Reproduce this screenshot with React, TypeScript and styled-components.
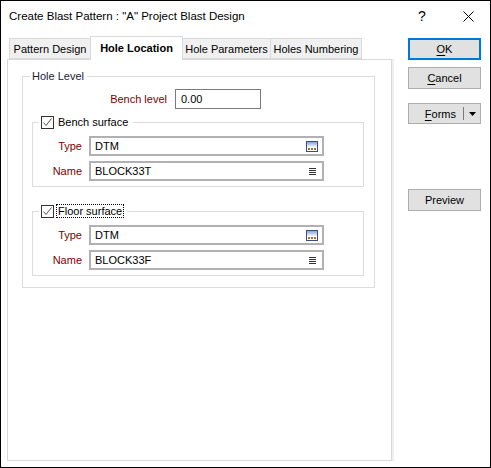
import React from 'react';
import styled, { createGlobalStyle } from 'styled-components';

const GlobalStyle = createGlobalStyle`
  html, body {
    margin: 0;
    padding: 0;
    background: #ffffff;
  }
  * {
    box-sizing: border-box;
  }
`;

const FONT = `"Liberation Sans", Arial, sans-serif`;

const Window = styled.div`
  width: 491px;
  height: 468px;
  border: 1px solid #000000;
  background: #ffffff;
  font-family: ${FONT};
  font-size: 11px;
  color: #000000;
  display: flex;
  flex-direction: column;
`;

const TitleBar = styled.div`
  height: 29px;
  display: flex;
  align-items: center;
  padding-left: 8px;
  padding-right: 10px;
  padding-top: 1px;
`;

const TitleText = styled.div`
  flex: 1;
  font-size: 11.5px;
  white-space: nowrap;
`;

const TitleButton = styled.div<{ $w: number }>`
  width: ${({ $w }) => $w}px;
  height: 29px;
  display: flex;
  align-items: center;
  justify-content: center;
  font-size: 14px;
`;

const Body = styled.div`
  flex: 1;
  display: flex;
  padding: 6px 0 0 6px;
`;

const LeftColumn = styled.div`
  width: 385px;
  display: flex;
  flex-direction: column;
`;

const TabStrip = styled.div`
  height: 23px;
  display: flex;
  align-items: flex-end;
  padding-left: 2px;
  position: relative;
  z-index: 1;
`;

const Tab = styled.div<{ $w: number; $active?: boolean }>`
  width: ${({ $w }) => $w}px;
  height: ${({ $active }) => ($active ? 24 : 21)}px;
  margin-bottom: ${({ $active }) => ($active ? -1 : 0)}px;
  margin-left: -1px;
  border: 1px solid #d9d9d9;
  border-bottom: ${({ $active }) => ($active ? 'none' : '1px solid #d9d9d9')};
  background: ${({ $active }) => ($active ? '#ffffff' : '#f0f0f0')};
  font-weight: ${({ $active }) => ($active ? 700 : 400)};
  display: flex;
  align-items: center;
  justify-content: center;
  padding-bottom: ${({ $active }) => ($active ? 2 : 0)}px;
  white-space: nowrap;
  position: relative;
  z-index: ${({ $active }) => ($active ? 2 : 1)};

  &:first-child {
    margin-left: 0;
  }
`;

const Panel = styled.div`
  height: 402px;
  border: 1px solid #d9d9d9;
  box-shadow: 2px 0 0 #f0f0f0;
  background: #ffffff;
  padding: 8px 0 0 14px;
`;

const Group = styled.fieldset<{ $w: number; $mt: number; $ml: number; $pb: number }>`
  width: ${({ $w }) => $w}px;
  margin: ${({ $mt }) => $mt}px 0 0 ${({ $ml }) => $ml}px;
  padding: 0 0 ${({ $pb }) => $pb}px 0;
  border: 1px solid #dcdcdc;
  min-width: 0;
`;

const Legend = styled.legend<{ $ml: number }>`
  margin-left: ${({ $ml }) => $ml}px;
  padding: 0 3px 0 2px;
  height: 16px;
  line-height: 16px;
  display: flex;
  align-items: center;
  color: #1a1a3a;
`;

const LegendText = styled.span<{ $focus?: boolean }>`
  margin-left: 2px;
  padding: 0 1px;
  line-height: 12px;
  border: 1px dotted ${({ $focus }) => ($focus ? '#000000' : 'transparent')};
  color: #000000;
`;

const CheckBox = styled.span`
  width: 13px;
  height: 13px;
  border: 1px solid #333333;
  background: #ffffff;
  display: inline-flex;
  align-items: center;
  justify-content: center;
`;

const FieldRow = styled.div<{ $mt: number }>`
  display: flex;
  align-items: center;
  margin-top: ${({ $mt }) => $mt}px;
`;

const FieldLabel = styled.div<{ $w: number }>`
  width: ${({ $w }) => $w}px;
  text-align: right;
  color: #800000;
  white-space: nowrap;
`;

const TextBox = styled.div<{ $w: number; $ml: number; $dark?: boolean }>`
  width: ${({ $w }) => $w}px;
  height: 20px;
  margin-left: ${({ $ml }) => $ml}px;
  border: ${({ $dark }) => ($dark ? '1px solid #7a7a7a' : '2px solid #b1b1b5')};
  display: flex;
  align-items: center;
  padding: 0 ${({ $dark }) => ($dark ? 5 : 4)}px 0 ${({ $dark }) => ($dark ? 5 : 4)}px;
  background: #ffffff;
`;

const BoxText = styled.span`
  flex: 1;
  white-space: nowrap;
`;

const RightColumn = styled.div`
  width: 73px;
  margin-left: 16px;
  padding-top: 2px;
  display: flex;
  flex-direction: column;
`;

const Button = styled.div<{ $mt: number; $h?: number; $default?: boolean }>`
  height: ${({ $h }) => $h ?? 22}px;
  margin-top: ${({ $mt }) => $mt}px;
  background: #e1e1e1;
  border: ${({ $default }) => ($default ? '2px solid #0078d7' : '1px solid #adadad')};
  display: flex;
  align-items: center;
  justify-content: center;
  white-space: nowrap;
`;

const SplitButton = styled(Button)`
  justify-content: flex-end;
  padding-right: 4px;
`;

const SplitDivider = styled.span`
  width: 1px;
  height: 13px;
  background: #7a7a7a;
  margin: 0 5px 0 7px;
`;

const Mnemonic = styled.span`
  text-decoration: underline;
  text-underline-offset: 2px;
`;

const IconSlot = styled.span`
  display: flex;
  margin-right: 2px;
`;

const Check = () => (
  <svg width="11" height="11" viewBox="0 0 11 11">
    <path d="M1.5 5.5 L4 8.5 L9.5 1.5" fill="none" stroke="#555555" strokeWidth="1" />
  </svg>
);

const DtmIcon = () => (
  <svg width="12" height="11" viewBox="0 0 12 11">
    <defs>
      <linearGradient id="dtmFill" x1="0" y1="0" x2="0" y2="1">
        <stop offset="0" stopColor="#7d9bd1" />
        <stop offset="0.6" stopColor="#ffffff" />
      </linearGradient>
    </defs>
    <rect x="0.5" y="0.5" width="11" height="10" fill="url(#dtmFill)" stroke="#33507f" />
    <rect x="2" y="7" width="2" height="2" fill="#a06a32" />
    <rect x="5" y="7" width="2" height="2" fill="#a06a32" />
    <rect x="8" y="7" width="2" height="2" fill="#a06a32" />
  </svg>
);

const ListIcon = () => (
  <svg width="7" height="7" viewBox="0 0 7 7">
    <rect x="0" y="0" width="7" height="1" fill="#333333" />
    <rect x="0" y="2" width="7" height="1" fill="#333333" />
    <rect x="0" y="4" width="7" height="1" fill="#333333" />
    <rect x="0" y="6" width="7" height="1" fill="#333333" />
  </svg>
);

const CloseIcon = () => (
  <svg width="11" height="11" viewBox="0 0 11 11">
    <path d="M0.5 0.5 L10.5 10.5 M10.5 0.5 L0.5 10.5" stroke="#000000" strokeWidth="1" />
  </svg>
);

const DropArrow = () => (
  <svg width="7" height="4" viewBox="0 0 7 4">
    <path d="M0 0 L7 0 L3.5 4 Z" fill="#000000" />
  </svg>
);

interface SurfaceProps {
  title: string;
  block: string;
  mt: number;
  focus?: boolean;
}

const SurfaceGroup: React.FC<SurfaceProps> = ({ title, block, mt, focus }) => (
  <Group $w={332} $mt={mt} $ml={9} $pb={5}>
    <Legend $ml={6}>
      <CheckBox>
        <Check />
      </CheckBox>
      <LegendText $focus={focus}>{title}</LegendText>
    </Legend>
    <FieldRow $mt={6}>
      <FieldLabel $w={49}>Type</FieldLabel>
      <TextBox $w={235} $ml={7}>
        <BoxText>DTM</BoxText>
        <DtmIcon />
      </TextBox>
    </FieldRow>
    <FieldRow $mt={5}>
      <FieldLabel $w={49}>Name</FieldLabel>
      <TextBox $w={235} $ml={7}>
        <BoxText>{block}</BoxText>
        <IconSlot>
          <ListIcon />
        </IconSlot>
      </TextBox>
    </FieldRow>
  </Group>
);

export default function App() {
  return (
    <>
      <GlobalStyle />
      <Window>
        <TitleBar>
          <TitleText>Create Blast Pattern : "A" Project Blast Design</TitleText>
          <TitleButton $w={20}>?</TitleButton>
          <TitleButton $w={24} />
          <TitleButton $w={24}>
            <CloseIcon />
          </TitleButton>
        </TitleBar>
        <Body>
          <LeftColumn>
            <TabStrip>
              <Tab $w={82}>Pattern Design</Tab>
              <Tab $w={93} $active>
                Hole Location
              </Tab>
              <Tab $w={89}>Hole Parameters</Tab>
              <Tab $w={92}>Holes Numbering</Tab>
            </TabStrip>
            <Panel>
              <Group $w={353} $mt={0} $ml={0} $pb={11}>
                <Legend $ml={7}>Hole Level</Legend>
                <FieldRow $mt={5}>
                  <FieldLabel $w={144}>Bench level</FieldLabel>
                  <TextBox $w={86} $ml={8} $dark>
                    <BoxText>0.00</BoxText>
                  </TextBox>
                </FieldRow>
                <SurfaceGroup title="Bench surface" block="BLOCK33T" mt={5} />
                <SurfaceGroup title="Floor surface" block="BLOCK33F" mt={16} focus />
              </Group>
            </Panel>
          </LeftColumn>
          <RightColumn>
            <Button $mt={0} $default>
              <Mnemonic>O</Mnemonic>K
            </Button>
            <Button $mt={7}>
              <Mnemonic>C</Mnemonic>ancel
            </Button>
            <SplitButton $mt={14} $h={21}>
              <Mnemonic>F</Mnemonic>orms
              <SplitDivider />
              <DropArrow />
            </SplitButton>
            <Button $mt={65}>Preview</Button>
          </RightColumn>
        </Body>
      </Window>
    </>
  );
}
